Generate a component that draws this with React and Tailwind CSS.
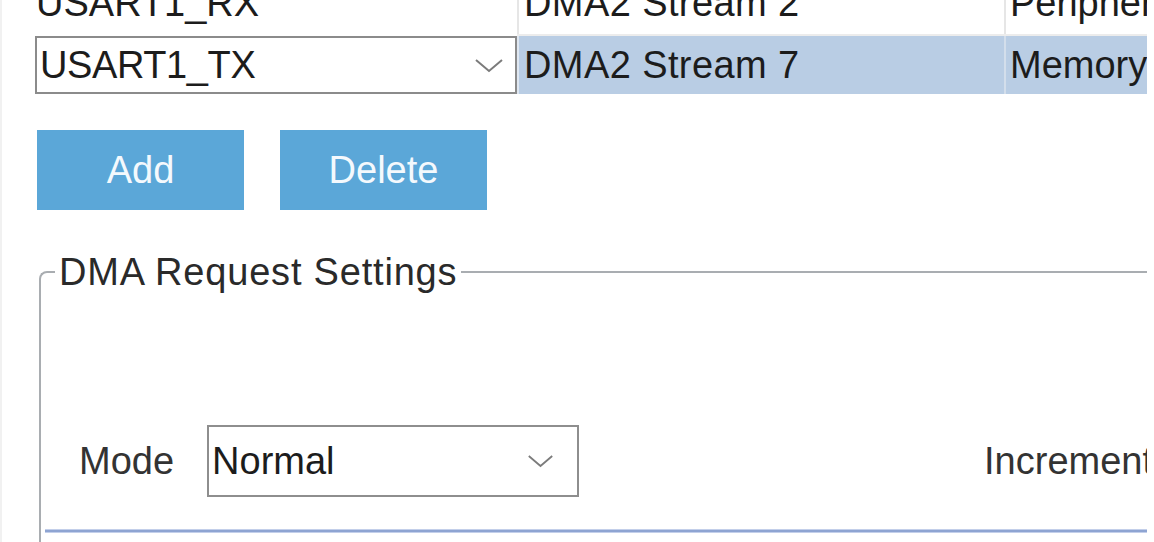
import React from "react";

const Chevron = ({ w = 30, h = 15 }) => (
  <svg width={w} height={h} viewBox="0 0 30 15" className="shrink-0">
    <path d="M2 2 L15 13 L28 2" fill="none" stroke="#7b7b7b" strokeWidth="2" />
  </svg>
);

export default function App() {
  return (
    <div className="w-[1154px] h-[542px] overflow-hidden bg-white">
      <div className="w-[1147px] h-full overflow-hidden border-l-2 border-[#f1f1f1] font-['Liberation_Sans',Arial,sans-serif] text-[38px] leading-[38px] text-[#1c1c1c]">
        {/* table */}
        <div className="mt-[-23px] ml-[33px]">
          <div className="flex h-[57px] whitespace-nowrap">
            <div className="w-[482px] shrink-0 flex items-center pl-[1px] pb-[5px]">USART1_RX</div>
            <div className="w-[2px] shrink-0 bg-[#e6e6e6]" />
            <div className="w-[485px] shrink-0 flex items-center pl-[5px] pb-[5px] tracking-[0.4px]">DMA2 Stream 2</div>
            <div className="w-[2px] shrink-0 bg-[#e6e6e6]" />
            <div className="flex-1 min-w-0 flex items-center pl-[4px] pb-[5px] overflow-hidden">Peripheral To Memory</div>
          </div>
          <div className="flex h-[2px]">
            <div className="w-[482px] shrink-0" />
            <div className="flex-1 bg-[#ececec]" />
          </div>
          <div className="flex h-[58px] whitespace-nowrap">
            <div className="w-[482px] shrink-0 h-full border-2 border-[#8b8b8b] bg-white flex items-center justify-between pl-[3px] pr-[11px]">
              <span className="tracking-[-0.4px]">USART1_TX</span>
              <Chevron />
            </div>
            <div className="w-[2px] shrink-0 bg-[#dfe7f1]" />
            <div className="w-[485px] shrink-0 bg-[#b9cde4] flex items-center pl-[5px] tracking-[0.4px]">DMA2 Stream 7</div>
            <div className="w-[2px] shrink-0 bg-[#d3deeb]" />
            <div className="flex-1 min-w-0 bg-[#b9cde4] flex items-center pl-[4px] overflow-hidden">Memory To Peripheral</div>
          </div>
        </div>

        {/* buttons */}
        <div className="flex gap-[36px] ml-[35px] mt-[36px]">
          <div className="w-[207px] h-[80px] bg-[#5ba7d8] text-[#f4f9fd] flex items-center justify-center">Add</div>
          <div className="w-[207px] h-[80px] bg-[#5ba7d8] text-[#f4f9fd] flex items-center justify-center">Delete</div>
        </div>

        {/* fieldset */}
        <fieldset className="mt-[43px] ml-[37px] min-w-0 border-t-2 border-l-2 border-r-0 border-b-0 border-[#a9adb1] rounded-tl-[8px] p-0 pl-[4px] pb-[40px]">
          <legend className="ml-[10px] px-[4px] text-[#2a2a2a] tracking-[0.8px]">DMA Request Settings</legend>
          <div className="mt-[134px] flex items-center whitespace-nowrap text-[#333333] overflow-hidden">
            <span className="ml-[34px] shrink-0">Mode</span>
            <div className="ml-[33px] shrink-0 w-[372px] h-[72px] border-2 border-[#8e8e8e] flex items-center justify-between pl-[3px] pr-[23px] text-[#1c1c1c]">
              <span>Normal</span>
              <Chevron w={27} h={14} />
            </div>
            <span className="ml-[405px] shrink-0">Increment Address</span>
          </div>
          <div className="mt-[32px] h-[4px] bg-[#8ea4d2] border-y border-[#c3cfea]" />
        </fieldset>
      </div>
    </div>
  );
}
